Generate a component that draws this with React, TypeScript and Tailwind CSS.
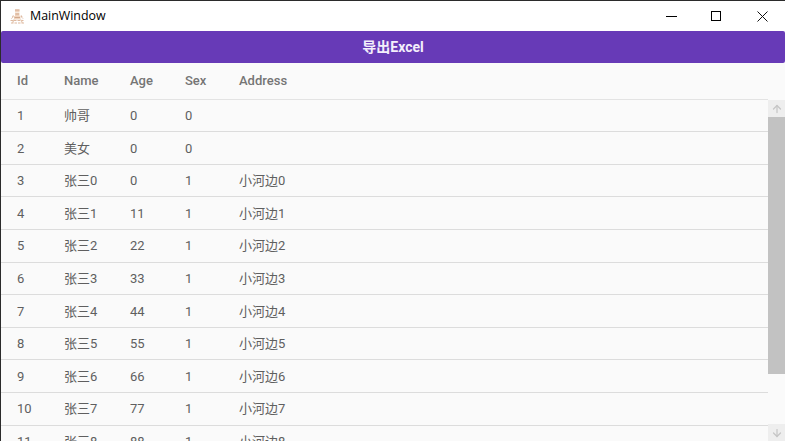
import { ArrowDown, ArrowUp } from "lucide-react";

const rows = [
  ["1", "帅哥", "0", "0", ""],
  ["2", "美女", "0", "0", ""],
  ["3", "张三0", "0", "1", "小河边0"],
  ["4", "张三1", "11", "1", "小河边1"],
  ["5", "张三2", "22", "1", "小河边2"],
  ["6", "张三3", "33", "1", "小河边3"],
  ["7", "张三4", "44", "1", "小河边4"],
  ["8", "张三5", "55", "1", "小河边5"],
  ["9", "张三6", "66", "1", "小河边6"],
  ["10", "张三7", "77", "1", "小河边7"],
  ["11", "张三8", "88", "1", "小河边8"],
];

const cols = "grid grid-cols-[47px_66px_55px_54px_1fr] pl-4";

function AppIcon() {
  return (
    <svg width="15" height="15" viewBox="0 0 15 15" fill="none">
      <path d="M5 0.500h4.500v2.500H5zM5 3.500h4.500v3.500H5zM4 7h6.500v3.500H4z" fill="#f0d5c0" />
      <path d="M5 1h4.500M5.500 5h3.500M4.500 8.500h5.500" stroke="#d2a88c" strokeWidth="1" />
      <path d="M3.500 6.500l-2 3.500M11 6.500l2 3.500M0.500 11.500h14M1 14h13" stroke="#deb9a0" strokeWidth="1.200" strokeDasharray="2.500 1" />
      <path d="M4 10.500l-1.500 3.500M10.500 10.500l2 3.500" stroke="#e5c8b2" strokeWidth="1.200" />
    </svg>
  );
}

export default function App() {
  return (
    <div className="flex h-[441px] w-[785px] flex-col overflow-hidden border-t border-l border-t-[#2b2b2b] border-l-[#2b2b2b] bg-[#fafafa] font-['Roboto','Noto_Sans_CJK_SC',sans-serif] text-[13px] text-[#5f5f5f]">
      <div className="flex h-[30px] shrink-0 items-center bg-white">
        <div className="ml-[9px] flex w-5 items-center">
          <AppIcon />
        </div>
        <span className="font-['Open_Sans',sans-serif] text-[12.4px] text-black">MainWindow</span>
        <div className="ml-auto flex h-full">
          <div className="flex w-[46px] items-center justify-center">
            <div className="ml-0.5 h-px w-[11px] bg-black" />
          </div>
          <div className="flex w-[46px] items-center justify-center">
            <div className="size-[10px] border border-black" />
          </div>
          <div className="flex w-[46px] items-center justify-center">
            <svg width="11" height="11" viewBox="0 0 11 11" stroke="#111" strokeWidth="1">
              <path d="M0.5 0.5l10 10M10.5 0.5l-10 10" />
            </svg>
          </div>
        </div>
      </div>
      <div className="flex h-8 shrink-0 items-center justify-center rounded-[2px] bg-[#673ab7] text-sm font-bold text-[#f3eefb]">
        导出Excel
      </div>
      <div className="flex min-h-0 flex-1">
        <div className="min-w-0 flex-1 overflow-hidden">
          <div className={`${cols} h-[36.65px] items-center border-b border-b-[#e3e3e3] pb-px text-[13px] font-medium text-[#757575]`}>
            <span>Id</span>
            <span>Name</span>
            <span>Age</span>
            <span>Sex</span>
            <span>Address</span>
          </div>
          {rows.map((row) => (
            <div key={row[0]} className={`${cols} h-[32.6px] items-center border-b border-b-[#dcdcdc] pt-[0.6px]`}>
              {row.map((cell, i) => (
                <span key={i}>{cell}</span>
              ))}
            </div>
          ))}
        </div>
        <div className="flex w-[17px] shrink-0 flex-col bg-[#fafafa]">
          <div className="mt-[37px] flex h-[17px] items-center justify-center bg-[#eeeeee] text-[#c6c6c6]">
            <ArrowUp size={12} strokeWidth={2.5} />
          </div>
          <div className="h-[257px] bg-[#c2c2c2]" />
          <div className="mt-auto flex h-[17px] items-center justify-center bg-[#eeeeee] text-[#c6c6c6]">
            <ArrowDown size={12} strokeWidth={2.5} />
          </div>
        </div>
      </div>
    </div>
  );
}
